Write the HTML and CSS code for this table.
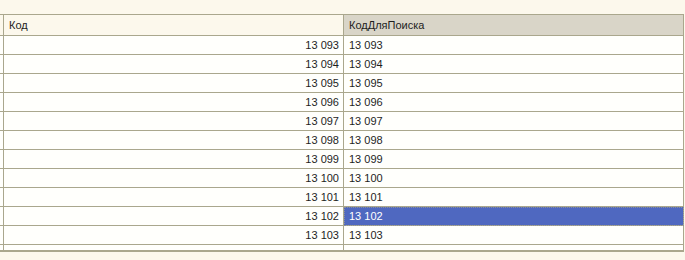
FILE: index.html
```html
<!DOCTYPE html>
<html>
<head>
<meta charset="utf-8">
<link rel="stylesheet" href="styles.css">
</head>
<body>
<div class="grid">
  <div class="row head">
    <div class="cell stub"></div>
    <div class="cell">Код</div>
    <div class="cell sorted">КодДляПоиска</div>
  </div>
  <div class="row"><div class="cell stub"></div><div class="cell num">13 093</div><div class="cell">13 093</div></div>
  <div class="row"><div class="cell stub"></div><div class="cell num">13 094</div><div class="cell">13 094</div></div>
  <div class="row"><div class="cell stub"></div><div class="cell num">13 095</div><div class="cell">13 095</div></div>
  <div class="row"><div class="cell stub"></div><div class="cell num">13 096</div><div class="cell">13 096</div></div>
  <div class="row"><div class="cell stub"></div><div class="cell num">13 097</div><div class="cell">13 097</div></div>
  <div class="row"><div class="cell stub"></div><div class="cell num">13 098</div><div class="cell">13 098</div></div>
  <div class="row"><div class="cell stub"></div><div class="cell num">13 099</div><div class="cell">13 099</div></div>
  <div class="row"><div class="cell stub"></div><div class="cell num">13 100</div><div class="cell">13 100</div></div>
  <div class="row"><div class="cell stub"></div><div class="cell num">13 101</div><div class="cell">13 101</div></div>
  <div class="row"><div class="cell stub"></div><div class="cell num">13 102</div><div class="cell selected">13 102</div></div>
  <div class="row"><div class="cell stub"></div><div class="cell num">13 103</div><div class="cell">13 103</div></div>
  <div class="row tail"><div class="cell stub"></div><div class="cell"></div><div class="cell"></div></div>
</div>
</body>
</html>
```
FILE: styles.css
```css
html, body {
  margin: 0;
  padding: 0;
  background: #fcf8ec;
}
body {
  font-family: "Liberation Sans", Arial, sans-serif;
  font-size: 11px;
  color: #1e1e1e;
  padding-top: 14px;
}
.grid {
  width: 684px;
  border-top: 1px solid #aaa78d;
  border-bottom: 2px solid #aaa78d;
}
.row {
  display: grid;
  grid-template-columns: 4px 340px 340px;
  height: 19px;
  background: #fffffc;
}
.cell {
  border-right: 1px solid #aaa78d;
  border-bottom: 1px solid #aaa78d;
  display: flex;
  align-items: center;
  padding: 0 5px;
  white-space: nowrap;
  overflow: hidden;
}
.cell.stub {
  padding: 0;
}
.cell.num {
  justify-content: flex-end;
  padding-right: 4px;
}
.head {
  height: 21px;
  background: #fcf8ec;
}
.head .sorted {
  background: #d9d5c8;
}
.cell.selected {
  background: #4f68c0;
  color: #ffffff;
  outline: 1px dotted #8a8f9c;
  outline-offset: -1px;
}
.tail {
  height: 5px;
}
.tail .cell {
  border-bottom: none;
}
```
